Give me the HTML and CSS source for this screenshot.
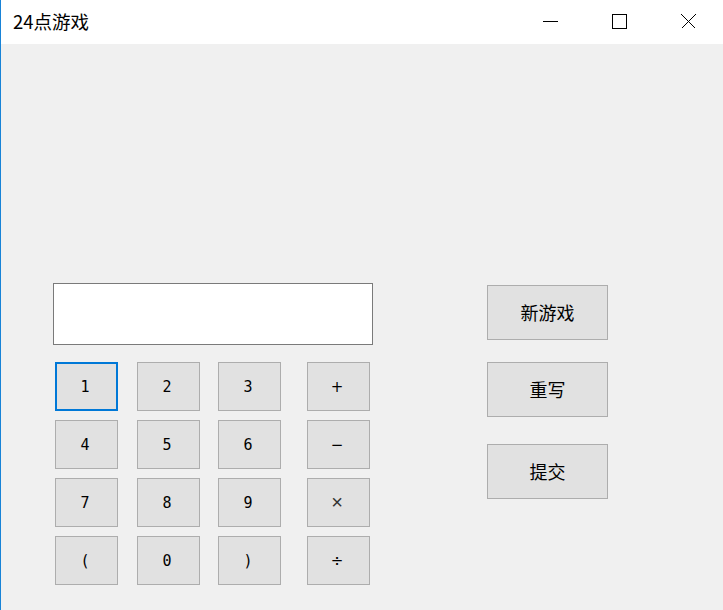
FILE: index.html
```html
<!DOCTYPE html>
<html lang="zh">
<head>
<meta charset="utf-8">
<title>24点游戏</title>
<link rel="stylesheet" href="styles.css">
</head>
<body>
<div class="window">
  <div class="titlebar">
    <div class="title">24点游戏</div>
    <div class="controls">
      <div class="ctrl"><svg width="15" height="15" viewBox="0 0 15 15"><line x1="0" y1="7.5" x2="15" y2="7.5" stroke="#000" stroke-width="1"/></svg></div>
      <div class="ctrl"><svg width="15" height="15" viewBox="0 0 15 15"><rect x="0.5" y="0.5" width="14" height="14" fill="none" stroke="#000" stroke-width="1"/></svg></div>
      <div class="ctrl"><svg width="15" height="15" viewBox="0 0 15 15"><path d="M0.5 0.5 L14.5 14.5 M14.5 0.5 L0.5 14.5" stroke="#000" stroke-width="1" fill="none"/></svg></div>
    </div>
  </div>
  <div class="client">
    <div class="left">
      <div class="display"></div>
      <div class="keypad">
        <button class="key focus">1</button>
        <button class="key">2</button>
        <button class="key">3</button>
        <button class="key op">+</button>
        <button class="key">4</button>
        <button class="key">5</button>
        <button class="key">6</button>
        <button class="key op">−</button>
        <button class="key">7</button>
        <button class="key">8</button>
        <button class="key">9</button>
        <button class="key op times">×</button>
        <button class="key">(</button>
        <button class="key">0</button>
        <button class="key">)</button>
        <button class="key op">÷</button>
      </div>
    </div>
    <div class="right">
      <button class="action new">新游戏</button>
      <button class="action redo">重写</button>
      <button class="action submit">提交</button>
    </div>
  </div>
</div>
</body>
</html>
```

FILE: styles.css
```css
* { box-sizing: border-box; }
html, body { margin: 0; padding: 0; }
body { width: 723px; height: 610px; overflow: hidden; background: #f0f0f0; }
.window {
  width: 723px;
  height: 610px;
  border-left: 1px solid #1883d7;
  display: flex;
  flex-direction: column;
}
.titlebar {
  height: 44px;
  background: #ffffff;
  display: flex;
  align-items: center;
  justify-content: space-between;
}
.title {
  padding-left: 12px;
  font-family: "Noto Sans CJK SC", "Noto Sans", sans-serif;
  font-size: 18.5px;
  color: #000;
  line-height: 44px;
  margin-top: -2px;
}
.controls { display: flex; height: 44px; }
.ctrl {
  width: 69px;
  height: 44px;
  display: flex;
  align-items: center;
  justify-content: center;
  margin-top: -1px;
}
.ctrl svg { display: block; shape-rendering: crispEdges; }
.client {
  flex: 1;
  background: #f0f0f0;
  display: flex;
  padding: 239px 0 0 52px;
}
.left { width: 320px; }
.display {
  width: 320px;
  height: 62px;
  background: #ffffff;
  border: 1px solid #7a7a7a;
}
.keypad {
  margin: 17px 0 0 2px;
  display: grid;
  grid-template-columns: 82px 81px 89px 63px;
  grid-auto-rows: 49px;
  row-gap: 9px;
}
button { font: inherit; margin: 0; padding: 0; cursor: default; }
.key {
  width: 63px;
  height: 49px;
  background: #e1e1e1;
  border: 1px solid #adadad;
  font-family: "DejaVu Sans Mono", "Liberation Mono", monospace;
  font-size: 15px;
  color: #000;
  display: flex;
  align-items: center;
  justify-content: center;
  padding-right: 3px;
}
.key.op { font-family: "DejaVu Sans", sans-serif; font-size: 15px; }
.key.times { font-family: "Liberation Sans", sans-serif; font-size: 20px; font-weight: 300; color: #333; }
.key.focus { border: 2px solid #0078d7; }
.right {
  margin-left: 114px;
  padding-top: 2px;
  display: flex;
  flex-direction: column;
}
.action {
  width: 121px;
  height: 55px;
  background: #e1e1e1;
  border: 1px solid #adadad;
  font-family: "Noto Sans CJK SC", sans-serif;
  font-size: 18px;
  color: #000;
  display: flex;
  align-items: center;
  justify-content: center;
  padding-bottom: 2px;
}
.redo { margin-top: 22px; }
.submit { margin-top: 27px; }
```
